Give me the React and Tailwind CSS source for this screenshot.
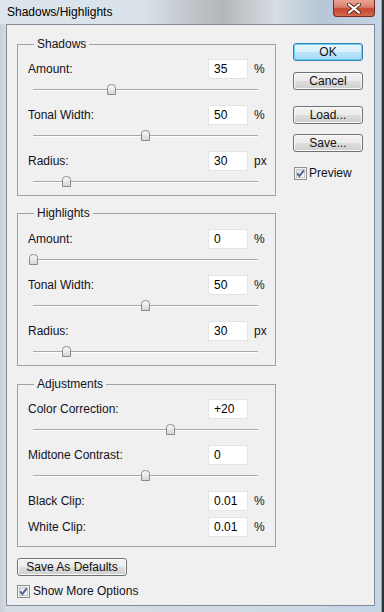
import React from "react";

const groups = [
  {
    title: "Shadows",
    cls: "pt-[7px] pb-[3px]",
    mt: "",
    rows: [
      { label: "Amount:", value: "35", unit: "%", pos: 0.35 },
      { label: "Tonal Width:", value: "50", unit: "%", pos: 0.5 },
      { label: "Radius:", value: "30", unit: "px", pos: 0.15 },
    ],
  },
  {
    title: "Highlights",
    cls: "pt-[8px] pb-[3px]",
    mt: "mt-[10px]",
    rows: [
      { label: "Amount:", value: "0", unit: "%", pos: 0 },
      { label: "Tonal Width:", value: "50", unit: "%", pos: 0.5 },
      { label: "Radius:", value: "30", unit: "px", pos: 0.15 },
    ],
  },
  {
    title: "Adjustments",
    cls: "pt-[7px] pb-[8px]",
    mt: "mt-[11px]",
    rows: [
      { label: "Color Correction:", value: "+20", unit: "", pos: 0.61 },
      { label: "Midtone Contrast:", value: "0", unit: "", pos: 0.5 },
      { label: "Black Clip:", value: "0.01", unit: "%" },
      { label: "White Clip:", value: "0.01", unit: "%" },
    ],
  },
];

const TRACK = 225;

const Thumb = () => (
  <svg width="9" height="11" viewBox="0 0 9 11">
    <defs>
      <linearGradient id="thumbg" x1="0" y1="0" x2="0" y2="1">
        <stop offset="0" stopColor="#fdfdfd" />
        <stop offset="1" stopColor="#d4d4d4" />
      </linearGradient>
    </defs>
    <path
      d="M0.5 10.5 V3.5 Q0.5 0.5 4.5 0.5 Q8.5 0.5 8.5 3.5 V10.5 Z"
      fill="url(#thumbg)"
      stroke="#8a8a8a"
    />
  </svg>
);

const Check = () => (
  <svg width="13" height="13" viewBox="0 0 13 13" className="shrink-0">
    <defs>
      <linearGradient id="cbg" x1="0" y1="0" x2="1" y2="1">
        <stop offset="0" stopColor="#dcdcdc" />
        <stop offset="1" stopColor="#ffffff" />
      </linearGradient>
    </defs>
    <rect x="0.5" y="0.5" width="12" height="12" fill="#f4f4f4" stroke="#8e8f8f" />
    <rect x="2.5" y="2.5" width="8" height="8" fill="url(#cbg)" stroke="#c6c6c6" />
    <path d="M3.2 6.4 L5.4 9 L9.8 3.4" fill="none" stroke="#4a5d98" strokeWidth="1.9" />
  </svg>
);

function SliderRow({ r }) {
  return (
    <div>
      <div className="flex items-center h-[22px]">
        <span className="flex-1">{r.label}</span>
        <input
          readOnly
          value={r.value}
          className="w-[40px] h-[20px] bg-white border border-[#e4e4e4] pl-[5px] text-[12px] text-black outline-none"
        />
        <span className="w-[22px] pl-[6px]">{r.unit}</span>
      </div>
      {r.pos !== undefined && (
        <div className="h-[20px] flex items-center">
          <div className="relative ml-[5px] w-[225px] h-[2px] border-t border-[#a9a9a9] border-b border-b-white">
            <div
              className="absolute top-[-6px] leading-none"
              style={{ left: r.pos * TRACK - 4.5 }}
            >
              <Thumb />
            </div>
          </div>
        </div>
      )}
    </div>
  );
}

function Btn({ children, primary, cls = "" }) {
  return (
    <button
      type="button"
      className={
        "h-[18px] rounded-[3px] border text-[12px] leading-none text-[#111] " +
        (primary
          ? "border-[#3c7fb1] bg-[linear-gradient(#eaf6fd_0%,#d9f0fc_49%,#bee6fd_50%,#a7d9f5_100%)] shadow-[inset_0_0_0_1px_#62d0f5] "
          : "border-[#707070] bg-[linear-gradient(#f2f2f2_0%,#ebebeb_49%,#dddddd_50%,#cfcfcf_100%)] shadow-[inset_0_0_0_1px_#fbfbfb] ") +
        cls
      }
    >
      {children}
    </button>
  );
}

export default function App() {
  return (
    <div className="w-[384px] h-[612px] flex flex-col bg-[linear-gradient(90deg,#c9cfd5_0%,#d6dde4_2%,#d2dbe4_60%,#c6d6e7_100%)] shadow-[inset_-2px_0_0_#2e3338,inset_-3px_0_0_#46bff0] font-['Liberation_Sans',Arial,sans-serif] text-[12px] text-[#121222]">
      <div className="h-[24px] flex items-start bg-[linear-gradient(90deg,#dce4ec_0%,#d9e1e9_38%,#bfc4c8_50%,#b4b7ba_58%,#d6dde3_72%,#b6c6d6_84%,#c7d6e5_100%)] shadow-[inset_-2px_0_0_#2e3338,inset_-3px_0_0_#46bff0]">
        <span className="pl-[7px] pt-[5px] text-black leading-[14px]">
          Shadows/Highlights
        </span>
        <div className="ml-auto mr-[9px] w-[42px] h-[17px] rounded-b-[4px] border border-t-0 border-[#7a2a20] bg-[linear-gradient(#e9a592_0%,#d8806c_45%,#c3452f_55%,#d26a4e_100%)] flex items-center justify-center">
          <svg width="14" height="11" viewBox="0 0 14 11">
            <path d="M2 1.5 L12 9.5 M12 1.5 L2 9.5" stroke="#5b2a22" strokeWidth="4" strokeLinecap="round" />
            <path d="M2 1.5 L12 9.5 M12 1.5 L2 9.5" stroke="#ffffff" strokeWidth="2.2" strokeLinecap="round" />
          </svg>
        </div>
      </div>

      <div className="flex-1 ml-[6px] mr-[9px] mb-[6px] border border-[#7f8a96] bg-[#f0f0f0] flex pl-[10px] pt-[12px]">
        <div className="w-[259px] flex flex-col">
          {groups.map((g) => (
            <fieldset key={g.title} className={"border border-[#a2a2a2] " + g.mt}>
              <legend className="ml-[16px] px-[3px] leading-[14px]">{g.title}</legend>
              <div className={"flex flex-col gap-[4px] pl-[10px] pr-[5px] " + g.cls}>
                {g.rows.map((r) => (
                  <SliderRow key={r.label} r={r} />
                ))}
              </div>
            </fieldset>
          ))}
          <Btn cls="mt-[11px] w-[110px] h-[17px]">Save As Defaults</Btn>
          <label className="mt-[8px] h-[14px] flex items-center gap-[3px]">
            <Check />
            <span>Show More Options</span>
          </label>
        </div>

        <div className="ml-[17px] mt-[6px] w-[70px] flex flex-col">
          <Btn primary cls="w-[70px]">OK</Btn>
          <Btn cls="w-[70px] mt-[11px]">Cancel</Btn>
          <Btn cls="w-[70px] mt-[16px]">Load...</Btn>
          <Btn cls="w-[70px] mt-[10px]">Save...</Btn>
          <label className="mt-[14px] h-[14px] flex items-center gap-[2px] pl-[1px]">
            <Check />
            <span>Preview</span>
          </label>
        </div>
      </div>
    </div>
  );
}
